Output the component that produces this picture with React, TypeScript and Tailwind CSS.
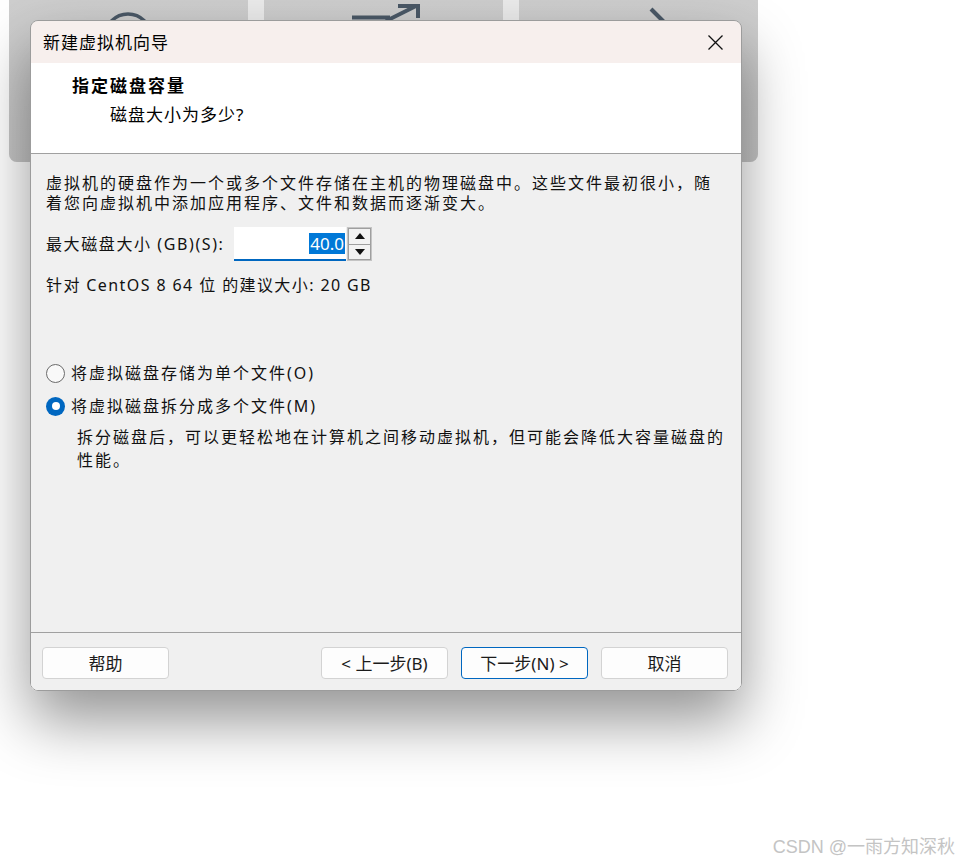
import React from 'react';

const Btn = ({ children, primary }: { children: React.ReactNode; primary?: boolean }) => (
  <button
    className={`w-[127px] h-[32px] rounded-[4px] border bg-[#fdfdfd] text-[17px] leading-none text-[#1b1b1b] flex items-center justify-center ${
      primary ? 'border-[#0067c0]' : 'border-[#d3d3d3]'
    }`}
  >
    {children}
  </button>
);

const Radio = ({ checked }: { checked?: boolean }) =>
  checked ? (
    <span className="w-[19px] h-[19px] rounded-full bg-[#0067c0] flex items-center justify-center shrink-0">
      <span className="w-[8px] h-[8px] rounded-full bg-white" />
    </span>
  ) : (
    <span className="w-[19px] h-[19px] rounded-full border border-[#6b6b6b] bg-[#f9f9f9] shrink-0" />
  );

const Arrow = ({ up }: { up?: boolean }) => (
  <svg width="10" height="6" viewBox="0 0 10 6">
    <path d={up ? 'M0 6 L5 0 L10 6 Z' : 'M0 0 L5 6 L10 0 Z'} fill="#111" />
  </svg>
);

export default function App() {
  return (
    <div className="relative w-[958px] h-[865px] bg-white overflow-hidden font-['Noto_Sans','Noto_Sans_CJK_SC',sans-serif] text-[#111]">
      {/* window behind the dialog */}
      <div className="absolute left-[9px] top-0 w-[749px] h-[162px] rounded-b-[8px] overflow-hidden bg-[#ebebeb] flex gap-[16px]">
        <div className="w-[239px] h-full bg-gradient-to-b from-[#cecece] to-[#c6c6c6]">
          <svg width="239" height="162" viewBox="0 0 239 162">
            <circle cx="119" cy="37" r="23" fill="none" stroke="#4a5866" strokeWidth="3.5" />
          </svg>
        </div>
        <div className="w-[239px] h-full bg-gradient-to-b from-[#cecece] to-[#c6c6c6]">
          <svg width="239" height="162" viewBox="0 0 239 162">
            <path d="M88 17.5 H126" stroke="#4a5866" strokeWidth="4" fill="none" />
            <path d="M122 21 L152 6" stroke="#4a5866" strokeWidth="4" fill="none" />
            <path d="M134 6 H154 V18" stroke="#4a5866" strokeWidth="4" fill="none" />
          </svg>
        </div>
        <div className="w-[239px] h-full bg-gradient-to-b from-[#cecece] to-[#c6c6c6]">
          <svg width="239" height="162" viewBox="0 0 239 162">
            <path d="M132 9 L152 29" stroke="#4a5866" strokeWidth="4" fill="none" />
          </svg>
        </div>
      </div>

      {/* dialog */}
      <div className="absolute left-[30px] top-[20px] w-[712px] h-[671px] rounded-[8px] border border-[#9c9c9c] overflow-hidden flex flex-col shadow-[0_30px_60px_rgba(0,0,0,0.42)]">
        <div className="h-[42px] shrink-0 bg-[#f7efed] flex items-center justify-between pl-[12px] pr-[18px]">
          <span className="text-[17px] leading-none text-black tracking-[1px]">新建虚拟机向导</span>
          <svg width="15" height="15" viewBox="0 0 15 15">
            <path d="M0.5 0.5 L14.5 14.5 M14.5 0.5 L0.5 14.5" stroke="#111" strokeWidth="1.3" />
          </svg>
        </div>

        <div className="h-[91px] shrink-0 bg-white border-b border-[#a0a0a0] pt-[11px]">
          <div className="pl-[41px] text-[17px] leading-[24px] font-bold text-black tracking-[2px]">指定磁盘容量</div>
          <div className="pl-[79px] mt-[5px] text-[17px] leading-[24px] text-black tracking-[1px]">磁盘大小为多少?</div>
        </div>

        <div className="flex-1 bg-[#f0f0f0] border-b border-[#a0a0a0] pt-[19px] pl-[15px]">
          <div className="text-[16px] leading-[20px] tracking-[2px] whitespace-nowrap">
            虚拟机的硬盘作为一个或多个文件存储在主机的物理磁盘中。这些文件最初很小，随
            <br />
            着您向虚拟机中添加应用程序、文件和数据而逐渐变大。
          </div>

          <div className="mt-[14px] flex items-center">
            <span className="w-[188px] text-[16px] leading-[20px] tracking-[1.6px] whitespace-nowrap">最大磁盘大小 (GB)(S):</span>
            <div className="w-[112px] h-[34px] bg-white border-b-2 border-[#0067c0] flex items-center justify-end pr-[1px]">
              <span className="bg-[#0078d7] text-white text-[17px] leading-[21px] px-[1px]">40.0</span>
            </div>
            <div className="ml-[1px] w-[25px] h-[34px] border border-[#c4c4c4] flex flex-col">
              <div className="flex-1 border border-[#9f9f9f] bg-[#f2f2f2] flex items-center justify-center">
                <Arrow up />
              </div>
              <div className="flex-1 border border-[#9f9f9f] border-t-0 bg-[#f2f2f2] flex items-center justify-center">
                <Arrow />
              </div>
            </div>
          </div>

          <div className="mt-[14px] text-[16px] leading-[20px] tracking-[1.4px] whitespace-nowrap">针对 CentOS 8 64 位 的建议大小: 20 GB</div>

          <div className="mt-[67px] flex items-center gap-[6px] h-[22px]">
            <Radio />
            <span className="text-[16px] leading-[22px] tracking-[2px] whitespace-nowrap">将虚拟磁盘存储为单个文件(O)</span>
          </div>
          <div className="mt-[11px] flex items-center gap-[6px] h-[22px]">
            <Radio checked />
            <span className="text-[16px] leading-[22px] tracking-[2px] whitespace-nowrap">将虚拟磁盘拆分成多个文件(M)</span>
          </div>
          <div className="mt-[9px] pl-[31px] text-[16px] leading-[23px] tracking-[2px] whitespace-nowrap">
            拆分磁盘后，可以更轻松地在计算机之间移动虚拟机，但可能会降低大容量磁盘的
            <br />
            性能。
          </div>
        </div>

        <div className="h-[57px] shrink-0 bg-[#f0f0f0] pt-[14px] pl-[11px] pr-[13px] flex items-start justify-between">
          <Btn>帮助</Btn>
          <div className="flex gap-[13px]">
            <Btn>&lt; 上一步(B)</Btn>
            <Btn primary>下一步(N) &gt;</Btn>
            <Btn>取消</Btn>
          </div>
        </div>
      </div>

      <div className="absolute right-[3px] top-[835px] text-[18px] leading-[24px] text-[#c4c4c4] font-['Liberation_Sans','Noto_Sans_CJK_SC',sans-serif]">
        CSDN @一雨方知深秋
      </div>
    </div>
  );
}
